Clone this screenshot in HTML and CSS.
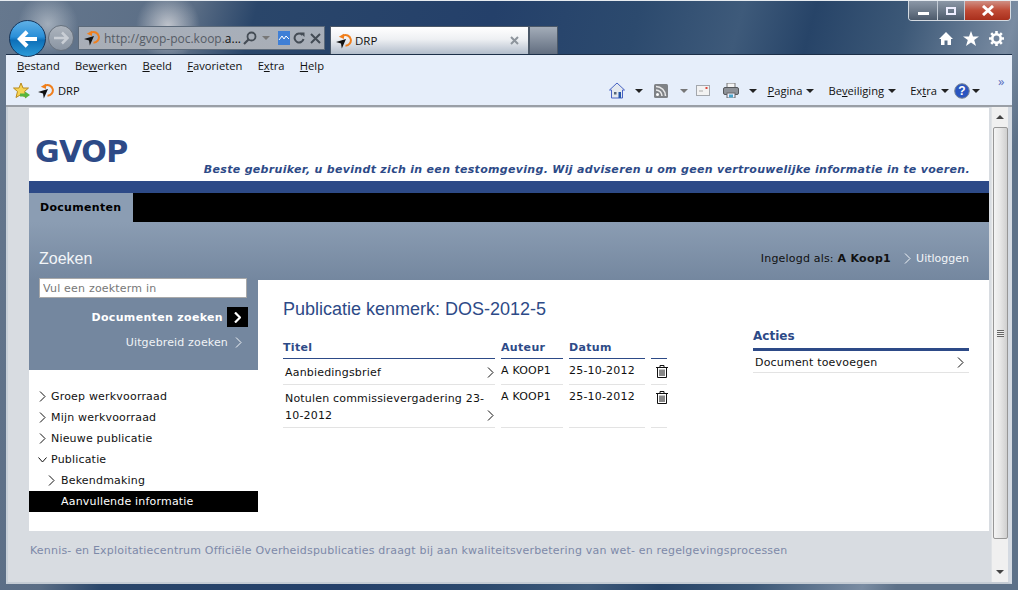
FILE: index.html
```html
<!DOCTYPE html>
<html lang="nl">
<head>
  <meta charset="UTF-8" />
  <meta name="viewport" content="width=device-width, initial-scale=1.0"/>
  <title>DRP</title>
  <link rel="stylesheet" href="styles.css">
</head>
<body>
  <svg class="defs" width="0" height="0">
    <symbol id="fav" viewBox="0 0 16 16">
      <path d="M7 2.6 A5.4 5.4 0 1 1 9.5 12.8" fill="none" stroke="#f07f1c" stroke-width="2"/>
      <path d="M2.8 3.8 L8 0.8 L8 6 Z" fill="#f07f1c"/>
      <path d="M0 9 L10 6 L5.8 15.5 L5 10.6 Z" fill="#111"/>
    </symbol>
    <symbol id="chev" viewBox="0 0 7 11">
      <path d="M1 .5 L6 5.5 L1 10.5" fill="none" stroke="currentColor" stroke-width="1"/>
    </symbol>
    <symbol id="trash" viewBox="0 0 12 13">
      <path d="M0 2.5 H12 M4 2.5 V.5 H8 V2.5 M1.5 2.5 V12.5 H10.5 V2.5 M4 4.5 V11 M6 4.5 V11 M8 4.5 V11" fill="none" stroke="#111" stroke-width="1"/>
    </symbol>
  </svg>

  <div class="window">
    <header class="chrome">
      <div class="back">
        <svg width="22" height="18" viewBox="0 0 24 20"><path d="M11 2 L3 10 L11 18 M3.5 10 H22" fill="none" stroke="#fff" stroke-width="4.5"/></svg>
      </div>
      <div class="forward">
        <svg width="16" height="14" viewBox="0 0 16 14"><path d="M9 1.5 L14.5 7 L9 12.5 M14 7 H1" fill="none" stroke="#c9ced5" stroke-width="2.5"/></svg>
      </div>
      <div class="address">
        <svg class="ico16" width="16" height="16"><use href="#fav"/></svg>
        <span class="url">http://gvop-poc.koop.<b>a...</b></span>
        <svg width="14" height="14" viewBox="0 0 14 14" class="a-search"><circle cx="8.5" cy="5.5" r="4" fill="none" stroke="#444c55" stroke-width="1.8"/><path d="M5.5 8.5 L1 13" stroke="#444c55" stroke-width="2.2"/></svg>
        <i class="caret gray a-caret"></i>
        <svg width="12" height="14" viewBox="0 0 12 14" class="a-compat"><rect width="12" height="14" fill="#3f7fd6"/><path d="M1 9 L4 5 L6 8 L8 5 L11 8" fill="none" stroke="#fff"/></svg>
        <svg width="12" height="12" viewBox="0 0 12 12" class="a-reload"><path d="M9.5 3 A4.5 4.5 0 1 0 10.5 7" fill="none" stroke="#444c55" stroke-width="2"/><path d="M7 .5 L11.5 .5 L11.5 5 Z" fill="#444c55"/></svg>
        <svg width="11" height="11" viewBox="0 0 11 11" class="a-stop"><path d="M1 1 L10 10 M10 1 L1 10" stroke="#444c55" stroke-width="2"/></svg>
      </div>
      <div class="tab">
        <svg width="16" height="16"><use href="#fav"/></svg>
        <span class="tab-title">DRP</span>
        <svg width="9" height="9" viewBox="0 0 9 9" class="tab-close"><path d="M1 1 L8 8 M8 1 L1 8" stroke="#8d949c" stroke-width="2"/></svg>
      </div>
      <div class="newtab"></div>
      <div class="chrome-right">
        <div class="caption">
          <div class="cap-btn cap-min"><i></i></div>
          <div class="cap-btn cap-max"><i></i></div>
          <div class="cap-btn cap-close">
            <svg width="14" height="11" viewBox="0 0 14 11"><path d="M2 1 L12 10 M12 1 L2 10" stroke="#fff" stroke-width="3"/></svg>
          </div>
        </div>
        <div class="tools">
          <svg width="14" height="13" viewBox="0 0 14 13"><path d="M7 0 L14 7 H12 V13 H8.5 V8.5 H5.5 V13 H2 V7 H0 Z" fill="#fff"/></svg>
          <svg width="16" height="15" viewBox="0 0 16 15"><path d="M8 0 L10 5.4 H16 L11.2 9 L13 15 L8 11.4 L3 15 L4.8 9 L0 5.4 H6 Z" fill="#fff"/></svg>
          <svg width="15" height="15" viewBox="0 0 15 15"><circle cx="7.5" cy="7.5" r="4.2" fill="none" stroke="#fff" stroke-width="2.6"/><path d="M7.5 0 V3 M7.5 12 V15 M0 7.5 H3 M12 7.5 H15 M2.2 2.2 L4.3 4.3 M10.7 10.7 L12.8 12.8 M12.8 2.2 L10.7 4.3 M4.3 10.7 L2.2 12.8" stroke="#fff" stroke-width="2.6"/></svg>
        </div>
      </div>
    </header>

    <div class="toolbars">
      <nav class="menubar">
        <span><u>B</u>estand</span>
        <span>Be<u>w</u>erken</span>
        <span><u>B</u>eeld</span>
        <span><u>F</u>avorieten</span>
        <span>E<u>x</u>tra</span>
        <span><u>H</u>elp</span>
      </nav>
      <div class="cmdbar">
        <svg class="fav-star" width="17" height="17" viewBox="0 0 17 17"><path d="M8 1 L10 6 H15.5 L11.5 9.5 L13 15.5 L8 12.5 L3 15.5 L4.5 9.5 L.5 6 H6 Z" fill="#f6d454" stroke="#b98a1e"/><path d="M7 11.5 H12 V9.5 L17 13 L12 16.5 V14.5 H7 Z" fill="#57b53d"/></svg>
        <svg class="fav-site" width="16" height="16"><use href="#fav"/></svg>
        <span class="fav-label">DRP</span>
        <div class="cmd-right">
          <svg class="c-home" width="16" height="17" viewBox="0 0 16 17"><path d="M8 1 L15.5 8 H13.5 V16 H2.5 V8 H.5 Z" fill="#e4e9ef" stroke="#4863c4"/><rect x="5" y="10" width="2.5" height="2.5" fill="#567"/><rect x="9.5" y="10" width="2.5" height="6" fill="#2556a8"/></svg>
          <i class="caret c-a1"></i>
          <svg class="c-rss" width="14" height="14" viewBox="0 0 14 14"><rect width="14" height="14" rx="1.5" fill="#7f8286"/><circle cx="3.5" cy="10.5" r="1.5" fill="#fff"/><path d="M2 6 A6 6 0 0 1 8 12 M2 2.5 A9.5 9.5 0 0 1 11.5 12" fill="none" stroke="#e8e8e8" stroke-width="1.6"/></svg>
          <i class="caret gray c-a2"></i>
          <svg class="c-mail" width="14" height="11" viewBox="0 0 14 11"><rect x=".5" y=".5" width="13" height="10" fill="#f2f2f2" stroke="#a3a7ad"/><rect x="9.5" y="2" width="2" height="2" fill="#e0443a"/><path d="M3 6 H7" stroke="#aaa"/></svg>
          <svg class="c-print" width="16" height="15" viewBox="0 0 16 15"><rect x="4" y="0" width="8" height="5" fill="#f4f4f4" stroke="#777"/><rect x=".5" y="4.5" width="15" height="7" rx="1.5" fill="#8d9197" stroke="#55585c"/><rect x="4" y="10" width="8" height="5" fill="#eef" stroke="#666"/><rect x="6" y="11.5" width="4" height="3" fill="#4aa5c9"/></svg>
          <i class="caret c-a3"></i>
          <span class="cmd-label c-pagina"><u>P</u>agina</span><i class="caret"></i>
          <span class="cmd-label c-beveil">Be<u>v</u>eiliging</span><i class="caret"></i>
          <span class="cmd-label c-extra">Ex<u>t</u>ra</span><i class="caret"></i>
          <svg class="c-help" width="16" height="16" viewBox="0 0 16 16"><circle cx="8" cy="8" r="7.3" fill="#2a55c0" stroke="#7c8794"/><text x="8" y="12" text-anchor="middle" class="help-q">?</text></svg>
          <i class="caret c-a4"></i>
          <span class="chevrons">&raquo;</span>
        </div>
      </div>
    </div>

    <div class="frame">
      <div class="page">
        <div class="sheet">
          <div class="top">
            <div class="logo">GVOP</div>
            <div class="notice">Beste gebruiker, u bevindt zich in een testomgeving. Wij adviseren u om geen vertrouwelijke informatie in te voeren.</div>
          </div>
          <div class="blue-bar"></div>
          <div class="mainnav"><a class="mainnav-tab">Documenten</a></div>
          <div class="columns">
            <aside class="sidebar">
              <div class="search">
                <h2>Zoeken</h2>
                <input class="search-input" type="text" placeholder="Vul een zoekterm in" />
                <div class="search-go">
                  <span>Documenten zoeken</span>
                  <span class="go-btn"><svg width="7" height="11" viewBox="0 0 7 11"><path d="M1 .5 L6 5.5 L1 10.5" fill="none" stroke="#fff" stroke-width="2.2"/></svg></span>
                </div>
                <div class="search-more">
                  <span>Uitgebreid zoeken</span>
                  <svg width="7" height="11"><use href="#chev"/></svg>
                </div>
              </div>
              <ul class="tree">
                <li><svg width="7" height="11"><use href="#chev"/></svg>Groep werkvoorraad</li>
                <li><svg width="7" height="11"><use href="#chev"/></svg>Mijn werkvoorraad</li>
                <li><svg width="7" height="11"><use href="#chev"/></svg>Nieuwe publicatie</li>
                <li><svg width="9" height="6" viewBox="0 0 9 6" class="open"><path d="M.5 .5 L4.5 5 L8.5 .5" fill="none" stroke="#111"/></svg>Publicatie</li>
                <li class="sub"><svg width="7" height="11"><use href="#chev"/></svg>Bekendmaking</li>
                <li class="sub active">Aanvullende informatie</li>
              </ul>
            </aside>
            <div class="content">
              <div class="userbar">
                <span>Ingelogd als: <b>A Koop1</b></span>
                <span class="logout"><svg width="7" height="11"><use href="#chev"/></svg>Uitloggen</span>
              </div>
              <div class="content-body">
                <main class="doc">
                  <h1>Publicatie kenmerk: DOS-2012-5</h1>
                  <table class="doc-table">
                    <thead>
                      <tr><th class="c-title">Titel</th><th class="c-author">Auteur</th><th class="c-date">Datum</th><th class="c-del"></th></tr>
                    </thead>
                    <tbody>
                      <tr class="row-one">
                        <td class="title-cell"><span>Aanbiedingsbrief</span><svg width="7" height="11"><use href="#chev"/></svg></td>
                        <td>A KOOP1</td><td>25-10-2012</td>
                        <td class="del-cell"><svg width="12" height="13"><use href="#trash"/></svg></td>
                      </tr>
                      <tr class="row-two">
                        <td class="title-cell"><span>Notulen commissievergadering 23-10-2012</span><svg width="7" height="11"><use href="#chev"/></svg></td>
                        <td>A KOOP1</td><td>25-10-2012</td>
                        <td class="del-cell"><svg width="12" height="13"><use href="#trash"/></svg></td>
                      </tr>
                    </tbody>
                  </table>
                </main>
                <section class="actions">
                  <h3>Acties</h3>
                  <div class="action-row"><span>Document toevoegen</span><svg width="7" height="11"><use href="#chev"/></svg></div>
                </section>
              </div>
            </div>
          </div>
        </div>
        <footer class="foot">Kennis- en Exploitatiecentrum Officiële Overheidspublicaties draagt bij aan kwaliteitsverbetering van wet- en regelgevingsprocessen</footer>
      </div>
      <div class="scrollbar">
        <i class="sb-up"></i>
        <div class="sb-thumb"><i></i></div>
        <i class="sb-down"></i>
      </div>
    </div>
  </div>
</body>
</html>
```

FILE: styles.css
```css
* {
  box-sizing: border-box;
}
html, body {
  margin: 0;
  height: 100%;
  overflow: hidden;
}
body {
  font-family: "DejaVu Sans", Verdana, sans-serif;
  font-size: 11px;
  color: #111;
  background:
    radial-gradient(ellipse 32px 34px at 168px 26px, rgba(225,225,228,.75), rgba(225,225,228,0)),
    radial-gradient(ellipse 30px 30px at 48px 24px, rgba(215,220,225,.55), rgba(215,220,225,0)),
    linear-gradient(105deg, #66788e 0, #5a6d85 190px, #2a466a 250px, #24406a 480px, #2c4a6e 620px, #3e5a7a 720px, #274468 790px, #3c5877 880px, #7a8ca2 985px, #5d7188 1018px);
}
.defs {
  display: block;
  height: 0;
}
.window {
  width: 1018px;
  height: 590px;
  display: flex;
  flex-direction: column;
  border-top: 1px solid #e6ebf0;
  padding: 0 6px 6px;
}

/* browser chrome */
.chrome {
  height: 53px;
  margin: 0 -6px;
  display: flex;
  align-items: flex-start;
  position: relative;
  z-index: 2;
}
.back {
  width: 37px;
  height: 37px;
  margin: 19px 0 0 9px;
  border-radius: 50%;
  border: 1px solid #16365c;
  background: linear-gradient(#5fb0e6, #2a8fd8 45%, #0d6fb8 55%, #2b9ad8);
  display: flex;
  align-items: center;
  justify-content: center;
}
.forward {
  width: 26px;
  height: 26px;
  margin: 24px 0 0 2px;
  border-radius: 50%;
  border: 1px solid #68727e;
  background: linear-gradient(#adb4bd, #8a95a3);
  display: flex;
  align-items: center;
  justify-content: center;
}
.address {
  width: 247px;
  height: 24px;
  margin: 25px 0 0 4px;
  padding-left: 5px;
  display: flex;
  align-items: center;
  background: linear-gradient(#a7afba, #a9aeb6);
  border: 1px solid #5c6a7a;
  font-family: "Open Sans", sans-serif;
  font-size: 12px;
}
.url {
  margin-left: 4px;
  width: 136px;
  color: #555c66;
  white-space: nowrap;
}
.url b {
  font-weight: 400;
  color: #111;
}
.a-search { margin-left: 3px; }
.a-caret { margin-left: 5px; }
.a-compat { margin-left: 8px; }
.a-reload { margin-left: 3px; }
.a-stop { margin-left: 5px; }
.tab {
  width: 199px;
  height: 28px;
  margin: 25px 0 0 5px;
  padding: 0 9px 0 5px;
  display: flex;
  align-items: center;
  background: linear-gradient(#fff, #eef0f3 45%, #b2bdcb);
  border: 1px solid #4b5868;
  border-bottom: 0;
  font-family: "Open Sans", sans-serif;
  font-size: 11.5px;
}
.tab-title {
  flex: 1;
  margin-left: 3px;
}
.newtab {
  width: 29px;
  height: 28px;
  margin-top: 25px;
  background: linear-gradient(#a3acb8, #626e80);
  border: 1px solid #4b5868;
  border-bottom: 0;
}
.chrome-right {
  margin-left: auto;
  width: 110px;
  padding-right: 7px;
}
.caption {
  display: flex;
  height: 20px;
  border: 1px solid #d4dae1;
  border-top: 0;
  border-radius: 0 0 4px 4px;
  overflow: hidden;
}
.cap-btn {
  display: flex;
  align-items: center;
  justify-content: center;
  background: linear-gradient(#8b97a6, #6d7a8a 50%, #4c5a6b);
  border-right: 1px solid #c4ccd6;
}
.cap-min { width: 29px; }
.cap-max { width: 27px; }
.cap-close {
  flex: 1;
  border-right: 0;
  background: linear-gradient(#cf8f84, #bf4a35 50%, #a92f1c);
}
.cap-min i {
  width: 11px;
  height: 3px;
  margin-top: 5px;
  background: #fff;
}
.cap-max i {
  width: 10px;
  height: 8px;
  border: 2px solid #eef;
}
.tools {
  display: flex;
  align-items: center;
  gap: 10px;
  margin: 10px 0 0 31px;
}

/* menu and command bar */
.toolbars {
  height: 53px;
  background: #e6eefa;
  border-top: 1px solid #1c2f48;
  border-bottom: 2px solid #9a9fa6;
  font-family: "Open Sans", sans-serif;
  font-size: 11.2px;
}
.menubar {
  height: 21px;
  padding-left: 11px;
  display: flex;
  align-items: center;
  gap: 15.3px;
}
.cmdbar {
  height: 29px;
  padding-left: 7px;
  display: flex;
  align-items: center;
}
.fav-site { margin-left: 8px; }
.fav-label { margin-left: 4px; }
.cmd-right {
  margin-left: auto;
  display: flex;
  align-items: center;
  padding-right: 1px;
}
.caret {
  display: inline-block;
  width: 0;
  height: 0;
  border-left: 4px solid transparent;
  border-right: 4px solid transparent;
  border-top: 4px solid #222;
}
.caret.gray {
  border-top-color: #777;
}
.c-a1 { margin-left: 10px; }
.c-rss { margin-left: 11px; }
.c-a2 { margin-left: 12px; }
.c-mail { margin-left: 8px; }
.c-print { margin-left: 13px; }
.c-a3 { margin-left: 10px; }
.cmd-label { margin-right: 4px; }
.c-pagina { margin-left: 10px; }
.c-beveil { margin-left: 14px; }
.c-extra { margin-left: 14px; }
.c-help { margin-left: 5px; }
.c-a4 { margin-left: 2px; }
.help-q {
  font: bold 12px "Liberation Sans", sans-serif;
  fill: #fff;
}
.chevrons {
  margin: -19px 0 0 18px;
  color: #5a6fc0;
  font-size: 13px;
  line-height: 1;
  width: 13px;
}

/* page frame */
.frame {
  flex: 1;
  min-height: 0;
  display: flex;
  border-right: 4px solid #d4dae2;
  border-bottom: 2px solid #c5ccd4;
  border-left: 2px solid #c8d0d8;
  background: #d8dce1;
}
.page {
  flex: 1;
  display: flex;
  flex-direction: column;
  padding: 1px 2px 0 21px;
  background: #d8dce1;
  letter-spacing: .19px;
}
.sheet {
  height: 423px;
  background: #fff;
  display: flex;
  flex-direction: column;
}
.top {
  height: 73px;
  display: flex;
  align-items: flex-end;
  padding: 0 19px 5px 6px;
}
.logo {
  font-size: 30px;
  font-weight: 700;
  line-height: 36px;
  letter-spacing: -.5px;
  color: #2d4a87;
  margin-bottom: 6px;
}
.notice {
  margin-left: auto;
  font-weight: 700;
  font-style: italic;
  font-size: 11px;
  letter-spacing: .31px;
  color: #2d4a87;
  white-space: nowrap;
}
.blue-bar {
  height: 12px;
  background: #2d4a87;
}
.mainnav {
  height: 29px;
  background: #000;
}
.mainnav-tab {
  display: block;
  width: 104px;
  height: 29px;
  line-height: 29px;
  padding-left: 11px;
  font-weight: 700;
  letter-spacing: .3px;
  color: #000;
  background: #8b9db3;
}
.columns {
  flex: 1;
  min-height: 0;
  display: flex;
}

/* left column */
.sidebar {
  width: 229px;
}
.search {
  height: 148px;
  padding: 27px 10px 0;
  background: linear-gradient(#8b9db3, #74879f 58px);
  color: #fff;
}
.search h2 {
  margin: 0;
  font: 400 16px/20px "Liberation Sans", Arial, sans-serif;
  letter-spacing: 0;
  color: #f2f5f8;
}
.search-input {
  display: block;
  width: 208px;
  height: 20px;
  margin-top: 9px;
  padding: 0 3px;
  border: 1px solid #a9a9a9;
  border-radius: 0;
  font: 11px "DejaVu Sans", Verdana, sans-serif;
  letter-spacing: .2px;
  background: #fff;
}
.search-input::placeholder {
  color: #777;
  opacity: 1;
}
.search-go {
  display: flex;
  align-items: center;
  justify-content: flex-end;
  margin-top: 9px;
  font-weight: 700;
  letter-spacing: .33px;
  width: 209px;
}
.go-btn {
  width: 21px;
  height: 20px;
  margin-left: 4px;
  background: #000;
  display: flex;
  align-items: center;
  justify-content: center;
}
.search-more {
  display: flex;
  align-items: center;
  justify-content: flex-end;
  gap: 7px;
  width: 203px;
  margin-top: 9px;
  color: #f0f3f6;
  letter-spacing: .15px;
}
.tree {
  list-style: none;
  margin: 16px 0 0;
  padding: 0;
}
.tree li {
  height: 21px;
  display: flex;
  align-items: center;
  padding-left: 10px;
  color: #111;
}
.tree li svg {
  margin-right: 5px;
}
.tree li svg.open {
  margin-left: -1px;
  margin-right: 4px;
}
.tree li.sub {
  padding-left: 19px;
}
.tree li.sub svg {
  margin-right: 6px;
}
.tree li.active {
  padding-left: 32px;
  background: #000;
  color: #fff;
}

/* right column */
.content {
  flex: 1;
  min-width: 0;
}
.userbar {
  height: 58px;
  padding: 28px 20px 0 0;
  background: linear-gradient(#8b9db3, #74879f);
  display: flex;
  justify-content: flex-end;
  align-items: flex-start;
  line-height: 17px;
}
.userbar b {
  letter-spacing: .33px;
}
.logout {
  margin-left: 13px;
  color: #f2f5f8;
  letter-spacing: 0;
  display: flex;
  align-items: center;
  gap: 5px;
}
.content-body {
  display: flex;
  padding-left: 25px;
}
.doc {
  width: 384px;
}
.doc h1 {
  margin: 19px 0 0;
  font: 400 18px/21px "Liberation Sans", Arial, sans-serif;
  letter-spacing: 0;
  color: #2d4a87;
}
.doc-table {
  border-collapse: separate;
  border-spacing: 6px 0;
  margin: 20px 0 0 -6px;
  table-layout: fixed;
  width: 396px;
}
.doc-table th {
  text-align: left;
  vertical-align: top;
  color: #2d4a87;
  font-weight: 700;
  letter-spacing: .33px;
  height: 19px;
  padding: 0;
  line-height: 15px;
  border-bottom: 1px solid #2d4a87;
}
.doc-table td {
  padding: 3px 0 0;
  vertical-align: top;
  border-bottom: 1px solid #e3e3e3;
  line-height: 17px;
}
.c-title { width: 212px; }
.c-author { width: 62px; }
.c-date { width: 76px; }
.c-del { width: 16px; }
.row-one td { height: 26px; }
.row-two td { height: 43px; }
.doc-table .title-cell {
  position: relative;
  padding-top: 5px;
}
.title-cell span {
  display: block;
  padding: 0 8px 0 2px;
}
.title-cell svg {
  position: absolute;
  right: 1px;
  bottom: 6px;
}
.doc-table .del-cell {
  padding: 6px 0 0 5px;
}
.del-cell svg {
  display: block;
}

/* actions */
.actions {
  width: 216px;
  margin: 47px 0 0 86px;
}
.actions h3 {
  margin: 0;
  font-size: 12px;
  line-height: 18px;
  letter-spacing: 0;
  color: #2d4a87;
  border-bottom: 3px solid #2d4a87;
  height: 24px;
}
.action-row {
  height: 22px;
  padding: 1px 5px 0 2px;
  display: flex;
  align-items: center;
  justify-content: space-between;
  border-bottom: 1px solid #e3e3e3;
}

.foot {
  padding: 13px 0 0 1px;
  color: #7d89a8;
  white-space: nowrap;
}

/* scrollbar */
.scrollbar {
  width: 17px;
  display: flex;
  flex-direction: column;
  align-items: center;
  background: #f0f0f0;
  border-left: 1px solid #e0e3e6;
  padding-top: 8px;
}
.sb-up,
.sb-down {
  width: 0;
  height: 0;
  border-left: 4px solid transparent;
  border-right: 4px solid transparent;
}
.sb-up {
  border-bottom: 4px solid #444;
}
.sb-down {
  border-top: 4px solid #444;
  margin-top: 31px;
}
.sb-thumb {
  width: 15px;
  height: 412px;
  margin-top: 8px;
  border: 1px solid #979797;
  border-radius: 2px;
  background: linear-gradient(90deg, #f4f4f4, #e6e6e6 50%, #cfcfcf);
  display: flex;
  align-items: center;
  justify-content: center;
}
.sb-thumb i {
  width: 7px;
  height: 7px;
  background: repeating-linear-gradient(#666 0 1px, #eee 1px 2px);
}
```
